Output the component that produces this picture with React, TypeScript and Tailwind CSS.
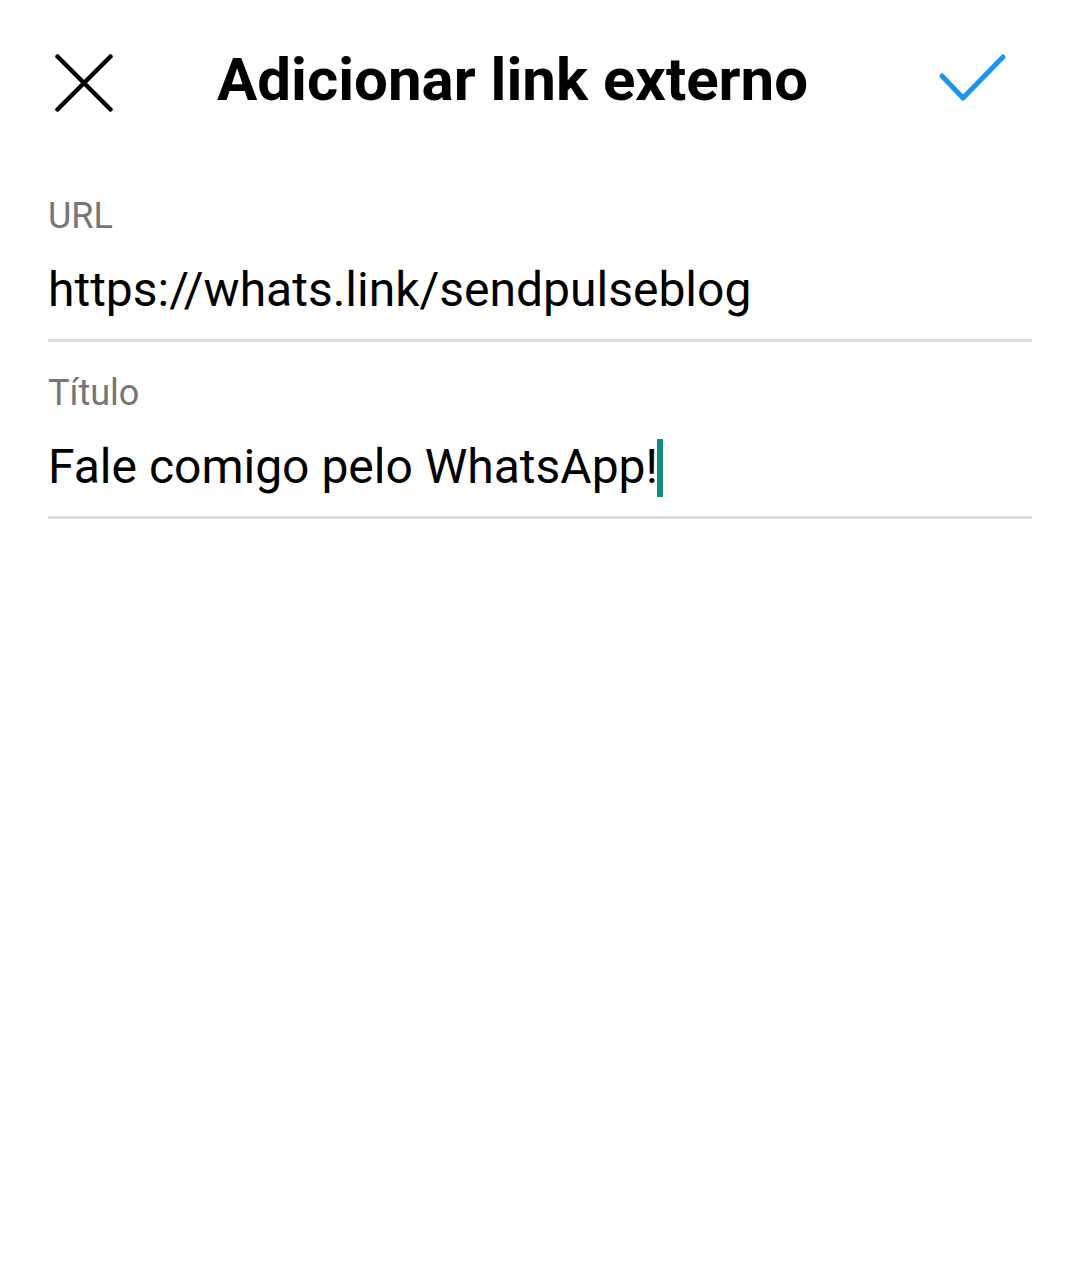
import React from "react";

export default function App() {
  return (
    <div className="w-[1080px] h-[1263px] bg-white" style={{ fontFamily: "Roboto, 'Noto Sans', sans-serif" }}>
      <div className="flex items-start h-[160px]">
        <svg className="ml-[55px] mt-[54px] shrink-0" width="58" height="58" viewBox="0 0 58 58">
          <path d="M2.5 2.5 L55.5 55.5 M55.5 2.5 L2.5 55.5" stroke="#000" strokeWidth="4.5" strokeLinecap="round" fill="none" />
        </svg>
        <div className="ml-[104px] mt-[50px] text-[60px] leading-[60px] font-bold text-black whitespace-nowrap">
          Adicionar link externo
        </div>
        <svg className="ml-auto mr-[70px] mt-[50px] shrink-0" width="74" height="55" viewBox="0 0 74 55">
          <path d="M6 26 L27 48 L67 7" stroke="#1a96ee" strokeWidth="5" strokeLinecap="round" strokeLinejoin="round" fill="none" />
        </svg>
      </div>
      <div className="px-[48px]">
        <div className="mt-[36px] text-[36px] leading-[40px] text-[#767676]">URL</div>
        <div className="mt-[26px] text-[48px] leading-[56px] text-black whitespace-nowrap">https://whats.link/sendpulseblog</div>
        <div className="mt-[21px] h-[3px] bg-[#dcdcdc]" />
        <div className="mt-[31px] text-[36px] leading-[40px] text-[#767676]">Título</div>
        <div className="mt-[26px] flex items-start">
          <span className="text-[48px] leading-[56px] text-black whitespace-nowrap">Fale comigo pelo WhatsApp!</span>
          <span className="ml-[-1px] w-[6px] h-[58px] bg-[#128c7e]" />
        </div>
        <div className="mt-[19px] h-[3px] bg-[#dcdcdc]" />
      </div>
    </div>
  );
}
